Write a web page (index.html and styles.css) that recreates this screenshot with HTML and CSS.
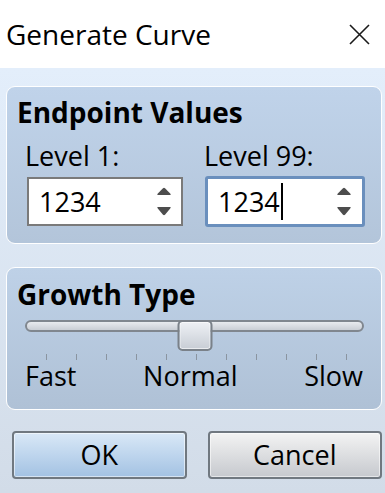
FILE: index.html
```html
<!DOCTYPE html>
<html>
<head>
<meta charset="utf-8">
<link rel="stylesheet" href="styles.css">
</head>
<body>
<div class="titlebar">
  <span class="title">Generate Curve</span>
  <svg class="close" width="21" height="21" viewBox="0 0 21 21"><path d="M1 1 L20 20 M20 1 L1 20" stroke="#1a1a1a" stroke-width="1.6" fill="none"/></svg>
</div>
<div class="content">
  <section class="group g1">
    <h2 class="gtitle">Endpoint Values</h2>
    <div class="fields">
      <div class="field">
        <div class="label">Level 1:</div>
        <div class="spin">
          <span class="val">1234</span>
          <svg class="arrows" width="16" height="29" viewBox="0 0 16 29"><path d="M1.5 8 Q1 7.5 1.8 6.6 L7 1.2 Q8 0.3 9 1.2 L14.2 6.6 Q15 7.5 14.5 8 Z" fill="#4d4d4d"/><path d="M1.5 20 L14.5 20 Q15 20.5 14.2 21.4 L9 27.8 Q8 28.7 7 27.8 L1.8 21.4 Q1 20.5 1.5 20 Z" fill="#4d4d4d"/></svg>
        </div>
      </div>
      <div class="field">
        <div class="label">Level 99:</div>
        <div class="spin focus">
          <span class="val">1234</span><span class="caret"></span>
          <svg class="arrows" width="16" height="29" viewBox="0 0 16 29"><path d="M1.5 8 Q1 7.5 1.8 6.6 L7 1.2 Q8 0.3 9 1.2 L14.2 6.6 Q15 7.5 14.5 8 Z" fill="#4d4d4d"/><path d="M1.5 20 L14.5 20 Q15 20.5 14.2 21.4 L9 27.8 Q8 28.7 7 27.8 L1.8 21.4 Q1 20.5 1.5 20 Z" fill="#4d4d4d"/></svg>
        </div>
      </div>
    </div>
  </section>
  <section class="group g2">
    <h2 class="gtitle">Growth Type</h2>
    <div class="slider">
      <div class="track"></div>
      <div class="thumb"></div>
    </div>
    <div class="ticks">
      <span></span><span></span><span></span><span></span><span></span><span></span><span></span><span></span><span></span><span></span><span></span>
    </div>
    <div class="scale"><span>Fast</span><span>Normal</span><span>Slow</span></div>
  </section>
  <div class="buttons">
    <button class="btn ok">OK</button>
    <button class="btn">Cancel</button>
  </div>
</div>
</body>
</html>
```
FILE: styles.css
```css
html, body {
  margin: 0;
  padding: 0;
}
body {
  width: 385px;
  height: 493px;
  overflow: hidden;
  font-family: "Open Sans", "Noto Sans", sans-serif;
  color: #000;
  background: #fff;
}
.titlebar {
  height: 68px;
  display: flex;
  align-items: center;
  justify-content: space-between;
  padding: 0 15px 0 6px;
  background: #fff;
}
.title {
  font-size: 28px;
  line-height: 68px;
}
.close {
  display: block;
}
.content {
  box-sizing: border-box;
  height: 425px;
  padding: 18px 3px 0 6px;
  background: linear-gradient(#e3eefb, #d2dce8);
}
.group {
  border: 1px solid #fff;
  border-radius: 9px;
  background: linear-gradient(#c0d3ea, #b3c5da);
}
.g1 {
  padding: 9px 17px 16px 10px;
}
.g2 {
  margin-top: 23px;
  padding: 10px 0 17px 0;
  background: linear-gradient(#bed1e7, #afc1d6);
}
.gtitle {
  margin: 0;
  font-size: 28px;
  font-weight: 700;
  line-height: 32px;
}
.g2 .gtitle {
  padding-left: 10px;
}
.fields {
  display: grid;
  grid-template-columns: 156px 158px;
  column-gap: 23px;
  margin-left: 10px;
}
.label {
  margin-top: 12px;
  font-size: 27px;
  line-height: 32px;
  margin-left: -2px;
}
.spin {
  box-sizing: border-box;
  height: 49px;
  margin-top: 5px;
  border: 2px solid #7a7a7a;
  background: #fff;
  display: flex;
  align-items: center;
  padding: 0 9px 0 10px;
}
.spin.focus {
  height: 51px;
  margin: 4px -1px 0 -1px;
  border: 3px solid #6a8fbd;
  border-radius: 3px;
  padding-right: 10px;
}
.val {
  font-size: 27px;
  line-height: 45px;
}
.caret {
  width: 2px;
  height: 37px;
  background: #000;
  margin-left: 1px;
}
.arrows {
  display: block;
  margin-left: auto;
}
.slider {
  position: relative;
  height: 31px;
  margin: 10px 17px 0 18px;
}
.track {
  box-sizing: border-box;
  margin-top: 10px;
  height: 12px;
  border: 2px solid #80878f;
  border-radius: 6px;
  background: linear-gradient(#e8ebef, #c9ced5);
}
.thumb {
  position: absolute;
  top: 0;
  left: 50%;
  transform: translateX(-50%);
  box-sizing: border-box;
  width: 35px;
  height: 31px;
  border: 2px solid #7a8189;
  border-radius: 5px;
  background: linear-gradient(#eef1f5, #c8cdd5);
  box-shadow: inset 0 0 0 1px rgba(255,255,255,0.6);
}
.ticks {
  display: flex;
  justify-content: space-between;
  height: 6px;
  margin-top: 3px;
  padding: 0 34px 0 39px;
}
.ticks span {
  width: 1px;
  height: 6px;
  background: #8a94a0;
}
.scale {
  display: flex;
  justify-content: space-between;
  padding: 0 18px;
  font-size: 27px;
  line-height: 32px;
}
.buttons {
  display: grid;
  grid-template-columns: 1fr 1fr;
  column-gap: 21px;
  margin: 21px 0 0 6px;
}
.btn {
  box-sizing: border-box;
  height: 48px;
  margin: 0;
  padding: 0;
  border: 2px solid #707880;
  border-radius: 4px;
  font-family: "Open Sans", "Noto Sans", sans-serif;
  font-size: 27px;
  line-height: 44px;
  color: #000;
  background: linear-gradient(#f3f3f3, #c6c9ce);
  box-shadow: inset 0 0 0 1px rgba(255,255,255,0.55);
}
.btn.ok {
  background: linear-gradient(#d9e8f7, #a3c2e3);
}
```
